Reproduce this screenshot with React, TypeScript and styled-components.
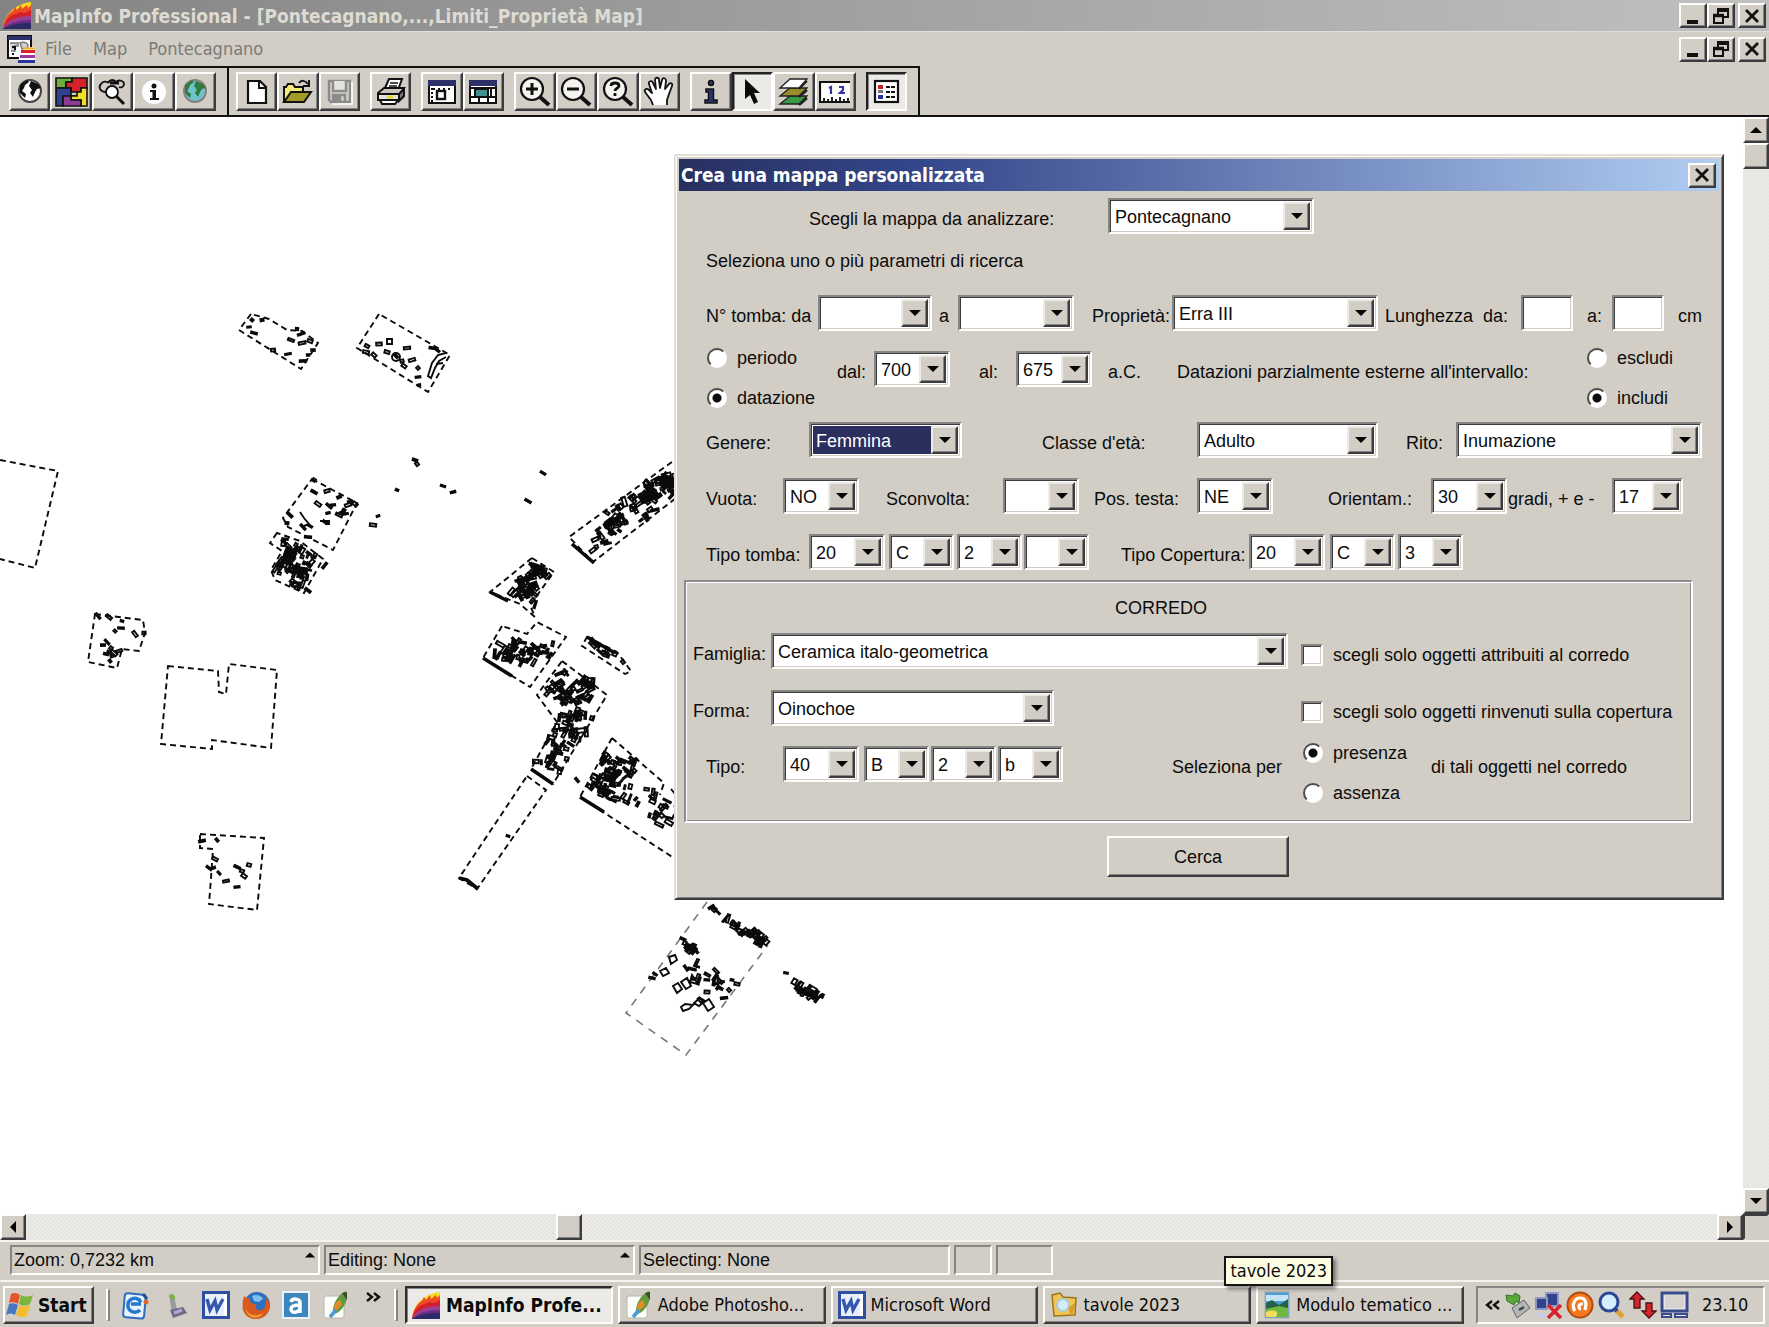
import React from "react";
import styled, { createGlobalStyle, css } from "styled-components";

const FACE = "#d2cec6";
const DARK = "#3c3c3e";
const MID = "#858583";
const UI = `"DejaVu Sans Condensed", "DejaVu Sans", sans-serif`;
const FORM = `"Liberation Sans", Arial, sans-serif`;

const GlobalStyle = createGlobalStyle`
  *, *::before, *::after { box-sizing: border-box; }
  body { margin: 0; background: ${FACE}; color: #0c0c0c; }
  button, input, select { font: inherit; color: inherit; margin: 0; padding: 0; border-radius: 0; }
  svg { display: block; flex: none; }
`;

const raised = css`
  background: ${FACE};
  border: 2px solid;
  border-color: #fdfdfb ${DARK} ${DARK} #fdfdfb;
  box-shadow: inset -1px -1px 0 ${MID};
`;
const sunken = css`
  border: 2px solid;
  border-color: ${MID} #fdfdfb #fdfdfb ${MID};
  box-shadow: inset 1px 1px 0 ${DARK}, inset -1px -1px 0 ${FACE};
`;

const Screen = styled.div`
  min-height: 100vh;
  display: flex;
  flex-direction: column;
  font: 18px/22px ${UI};
`;

/* ---------- window chrome ---------- */
const TitleBar = styled.header`
  display: flex;
  align-items: center;
  height: 31px;
  padding: 0 3px;
  gap: 2px;
  background: linear-gradient(90deg, #848484, #c0c0c0);
`;
const WindowTitle = styled.h1`
  flex: 1;
  margin: 0;
  font-size: 19px;
  line-height: 24px;
  font-weight: bold;
  color: #dedbd2;
  white-space: nowrap;
`;
const MenuBar = styled.nav`
  display: flex;
  align-items: center;
  height: 35px;
  padding: 0 3px 0 7px;
  border-top: 1px solid #e2dfd8;
`;
const Menus = styled.div`
  flex: 1;
  display: flex;
  gap: 21px;
  padding-left: 9px;
`;
const MenuItem = styled.button`
  border: 0;
  background: none;
  color: #7c7b78;
`;
const Controls = styled.div`
  display: flex;
`;
const ChromeButton = styled.button<{ $apart?: boolean }>`
  ${raised}
  width: 28px;
  height: 25px;
  display: grid;
  place-items: center;
  margin-left: ${(p) => (p.$apart ? 3 : 0)}px;
`;

/* ---------- tool bar ---------- */
const ToolStrip = styled.div`
  display: flex;
  border-bottom: 2px solid #111;
`;
const ToolSection = styled.div`
  display: flex;
  gap: 10px;
  padding: 4px 11px 4px 9px;
  border-top: 2px solid #111;
  border-right: 2px solid #111;
  & + & { padding-left: 7px; }
`;
const groupWidth: Record<number, number> = { 1: 41, 2: 83, 3: 124, 4: 166, 5: 207 };
const ToolGroup = styled.div<{ $count: number }>`
  display: grid;
  grid-auto-flow: column;
  grid-auto-columns: 1fr;
  width: ${(p) => groupWidth[p.$count]}px;
`;
const ToolButton = styled.button<{ $pressed?: boolean }>`
  ${raised}
  height: 39px;
  display: grid;
  place-items: center;
  ${(p) =>
    p.$pressed &&
    css`
      background: #eceae6;
      border-color: #222 #fdfdfb #fdfdfb #222;
      box-shadow: inset 1px 1px 0 ${MID};
    `}
`;

/* ---------- map and scroll bars ---------- */
const Workspace = styled.main`
  flex: 1;
  display: grid;
  grid-template-columns: minmax(0, 1fr) 26px;
  grid-template-rows: minmax(1097px, 1fr) 26px;
`;
const MapPane = styled.section`
  position: relative;
  background: #fff;
  overflow: hidden;
`;
const ScrollBar = styled.div<{ $vertical?: boolean }>`
  display: flex;
  flex-direction: ${(p) => (p.$vertical ? "column" : "row")};
  background: repeating-conic-gradient(#e5e4df 0 25%, #eaeae6 0 50%) 0 0 / 4px 4px;
`;
const ScrollButton = styled.button`
  ${raised}
  width: 26px;
  height: 26px;
  display: grid;
  place-items: center;
`;
const Track = styled.div<{ $grow: number }>`
  flex: ${(p) => p.$grow} 1 0;
`;
const Corner = styled.div`
  border: 2px solid;
  border-color: ${DARK} transparent transparent ${DARK};
`;

/* ---------- dialog ---------- */
const DialogFrame = styled.form`
  position: absolute;
  left: 674px;
  top: 37px;
  width: 1050px;
  padding: 3px;
  background: ${FACE};
  border: 2px solid;
  border-color: #e2dfd8 ${DARK} ${DARK} #e2dfd8;
  box-shadow: inset 1px 1px 0 #fff, inset -1px -1px 0 ${MID};
  font: 18px/22px ${FORM};
`;
const DialogTitle = styled.div`
  display: flex;
  align-items: center;
  justify-content: space-between;
  height: 32px;
  padding: 0 3px 0 2px;
  background: linear-gradient(90deg, #28305f, #33458a 22%, #6075ae 50%, #b1cdf2);
`;
const DialogName = styled.h2`
  margin: 0;
  font: bold 19px/24px ${UI};
  color: #fff;
`;
const DialogBody = styled.div`
  display: flex;
  flex-direction: column;
  padding: 7px 5px 18px;
`;
const Row = styled.div<{ $cols: string; $top?: number; $left?: number; $tall?: boolean }>`
  display: grid;
  grid-template-columns: ${(p) => p.$cols};
  align-items: ${(p) => (p.$tall ? "start" : "center")};
  min-height: 36px;
  margin-top: ${(p) => p.$top ?? 0}px;
  padding-left: ${(p) => p.$left ?? 22}px;
`;
const Text = styled.span`
  padding-top: 6px;
  white-space: pre;
`;
const FieldLabel = styled.label`
  padding-top: 6px;
  white-space: pre;
`;
const Intro = styled.p`
  margin: 16px 0 0 22px;
`;
const Lowered = styled.div<{ $cols: string }>`
  display: grid;
  grid-template-columns: ${(p) => p.$cols};
  align-items: center;
  padding-top: 6px;
`;
const ComboBox = styled.span<{ $w: number }>`
  ${sunken}
  display: flex;
  width: ${(p) => p.$w}px;
  height: 36px;
  padding: 2px;
  background: #fff;
`;
const ComboSelect = styled.select<{ $active?: boolean }>`
  appearance: none;
  flex: 1;
  min-width: 0;
  height: 28px;
  padding: 2px 0 0 3px;
  border: 0;
  outline: 0;
  background: ${(p) => (p.$active ? "#2a2f5e" : "#fff")};
  color: ${(p) => (p.$active ? "#fff" : "inherit")};
`;
const ComboArrow = styled.span`
  ${raised}
  border-color: #eceae4 ${DARK} ${DARK} #eceae4;
  flex: none;
  width: 27px;
  display: grid;
  place-items: center;
  pointer-events: none;
`;
const TextBox = styled.input`
  ${sunken}
  width: 52px;
  height: 36px;
  padding: 0 4px;
  background: #fff;
`;
const Choices = styled.div`
  display: grid;
  gap: 18px;
  padding-top: 2px;
`;
const Choice = styled.label<{ $low?: boolean }>`
  display: flex;
  align-items: center;
  gap: 10px;
  height: 22px;
  margin-top: ${(p) => (p.$low ? 8 : 0)}px;
  white-space: nowrap;
`;
const Radio = styled.input`
  appearance: none;
  width: 20px;
  height: 20px;
  border-radius: 50%;
  border: 2px solid;
  border-color: #4c4c4c #fff #fff #4c4c4c;
  background: #fff;
  &:checked { background: radial-gradient(circle, #0c0c0c 0 4px, #fff 5px); }
`;
const Check = styled.input`
  ${sunken}
  appearance: none;
  width: 22px;
  height: 22px;
  background: #fff;
`;
const Fieldset = styled.fieldset`
  margin: 10px 21px 0 0;
  padding: 0 0 17px;
  min-width: 0;
  border: 2px solid;
  border-color: #8a8c90 #fff #fff #8a8c90;
  box-shadow: inset 1px 1px 0 #fff, inset -1px -1px 0 #8a8c90;
`;
const GroupTitle = styled.h3`
  margin: 15px 0 0;
  padding-left: 429px;
  font: inherit;
`;
const SubmitButton = styled.button`
  ${raised}
  width: 182px;
  height: 41px;
  margin: 13px 0 0 423px;
`;

/* ---------- status bar and task bar ---------- */
const StatusBar = styled.footer`
  display: flex;
  gap: 4px;
  height: 40px;
  padding: 3px 10px 5px;
  border-top: 2px solid #f4f3ef;
  font: 18px/22px ${FORM};
`;
const StatusCell = styled.div<{ $w: number }>`
  width: ${(p) => p.$w}px;
  height: 30px;
  display: flex;
  justify-content: space-between;
  padding: 2px;
  border: 2px solid;
  border-color: ${MID} #fdfdfb #fdfdfb ${MID};
`;
const TaskBar = styled.footer`
  display: flex;
  align-items: flex-start;
  height: 47px;
  padding: 4px 4px 0 3px;
  border-top: 2px solid #f4f3ef;
`;
const StartButton = styled.button`
  ${raised}
  display: flex;
  align-items: center;
  gap: 3px;
  width: 91px;
  height: 38px;
  padding-left: 1px;
  font-size: 19px;
  font-weight: bold;
`;
const Grip = styled.span`
  width: 4px;
  height: 32px;
  border: 1px solid;
  border-width: 1px 2px 1px 2px;
  border-color: #fff ${MID} ${MID} #fff;
`;
const QuickLaunch = styled.div`
  display: flex;
  align-items: center;
  gap: 12px;
  height: 38px;
  padding: 0 7px 0 12px;
`;
const QuickButton = styled.button`
  border: 0;
  background: none;
  width: 28px;
  height: 30px;
  display: grid;
  place-items: center;
`;
const MoreButton = styled.button`
  border: 0;
  background: none;
  height: 30px;
  width: 20px;
  display: grid;
  justify-items: end;
  align-items: start;
`;
const Tasks = styled.div`
  flex: 1;
  display: grid;
  grid-template-columns: repeat(5, minmax(0, 1fr));
  gap: 5px;
  padding-right: 12px;
`;
const TaskSlot = styled.div`
  position: relative;
`;
const TaskButton = styled.button<{ $active?: boolean }>`
  ${raised}
  width: 100%;
  height: 38px;
  display: flex;
  align-items: center;
  gap: 5px;
  padding-left: 5px;
  white-space: nowrap;
  ${(p) =>
    p.$active &&
    css`
      background: #eceae6;
      border-color: #2c2c2c #fdfdfb #fdfdfb #2c2c2c;
      box-shadow: inset 1px 1px 0 ${MID};
      font-size: 19px;
      font-weight: bold;
    `}
`;
const Tip = styled.span`
  position: absolute;
  z-index: 2;
  left: 181px;
  top: -30px;
  padding: 2px 4px;
  white-space: nowrap;
  background: #fdfde4;
  border: 2px solid #141414;
  box-shadow: 3px 3px 4px rgba(0, 0, 0, 0.45);
`;
const Tray = styled.div`
  display: flex;
  align-items: center;
  gap: 3px;
  height: 38px;
  width: 289px;
  padding-left: 6px;
  border: 2px solid;
  border-color: ${MID} #fdfdfb #fdfdfb ${MID};
`;
const Clock = styled.time`
  padding-left: 10px;
`;

/* ---------- small glyphs ---------- */
const Tri = ({ d, w = 14 }: { d: "up" | "down" | "left" | "right"; w?: number }) => {
  const pts = { up: "1,10 13,10 7,4", down: "1,4 13,4 7,10", left: "10,1 10,13 4,7", right: "4,1 4,13 10,7" }[d];
  return (
    <svg width={w} height={w} viewBox="0 0 14 14" aria-hidden="true">
      <polygon points={pts} fill="#050505" />
    </svg>
  );
};
const MinGlyph = () => (
  <svg width="18" height="18" viewBox="0 0 18 18"><rect x="3" y="13" width="11" height="4" fill="#111" /></svg>
);
const RestoreGlyph = () => (
  <svg width="18" height="18" viewBox="0 0 18 18" fill="none" stroke="#111">
    <path d="M6 7V2.500H16V10H12" strokeWidth="2" /><path d="M5 3H17" strokeWidth="4" />
    <rect x="2" y="8" width="9" height="8" strokeWidth="2" fill={FACE} /><path d="M1 8.500H12" strokeWidth="3.500" />
  </svg>
);
const CloseGlyph = () => (
  <svg width="18" height="18" viewBox="0 0 18 18"><path d="M3 3L15 15M15 3L3 15" stroke="#111" strokeWidth="2.800" /></svg>
);
const Chevrons = ({ left }: { left?: boolean }) => (
  <svg width="17" height="14" viewBox="0 0 17 14" fill="none" stroke="#111" strokeWidth="2.400">
    {left ? <path d="M8 3L3 7L8 11M15 3L10 7L15 11" /> : <path d="M2 3L7 7L2 11M9 3L14 7L9 11" />}
  </svg>
);

/* ---------- icons ---------- */
const MapInfoIcon = () => (
  <svg width="29" height="27" viewBox="0 0 29 27">
    <path d="M0 27C1 12 12 2 28 0V27Z" fill="#f6dc1c" />
    <path d="M0 27C1 16 7 10 10 9L12 5L14 8L18 3L19 7L24 3L25 6L28 3V27Z" fill="#ee4a23" />
    <path d="M0 27C2 17 8 13 13 12L17 10L22 11L28 8V27Z" fill="#d4202e" />
    <path d="M0 27C4 18 14 14 28 14V27Z" fill="#9c3f94" />
    <path d="M0 27C6 21 14 18 28 18V27Z" fill="#6a2c86" />
    <path d="M0 27C8 22 16 21 28 21V27Z" fill="#2c2b66" />
  </svg>
);
const DocIcon = () => (
  <svg width="29" height="28" viewBox="0 0 29 28">
    <rect x="1" y="1" width="23" height="22" fill="#fff" stroke="#111" strokeWidth="2" />
    <rect x="1" y="1" width="23" height="4" fill="#2b3166" />
    <path d="M3 8h8v3H8v5H4M13 8c4-2 8 0 8 3s-3 4-6 3z" fill="#cfcfcf" stroke="#777" strokeWidth="1.500" />
    <path d="M5 12h3v3M6 18v2" stroke="#111" strokeWidth="2" fill="none" />
    <path d="M13 17C17 13 22 12 28 12V28H11Z" fill="#fff" />
    <path d="M17 13.500H28" stroke="#f2b51d" strokeWidth="2" />
    <path d="M14 16.500H28" stroke="#d7232c" strokeWidth="3" />
    <path d="M13 21.500H28" stroke="#a0379a" strokeWidth="3" />
    <path d="M11 26.500H28" stroke="#27359a" strokeWidth="3" />
  </svg>
);
const Globe = ({ sea, land, edge }: { sea: string; land: string; edge: string }) => (
  <svg width="30" height="28" viewBox="0 0 30 28">
    <circle cx="15" cy="13" r="11" fill={sea} stroke={edge} strokeWidth="2" />
    <path d="M5 7L12 2L14 4L10 7L9 10L7 13L11 16L10 20L5 15Z" fill={land} />
    <path d="M16 3L23 6L26 10L22 11L20 14L18 19L15 15L17 12L14 8Z" fill={land} />
  </svg>
);
const PuzzleIcon = () => (
  <svg width="33" height="30" viewBox="0 0 33 30" stroke="#111" strokeWidth="1.600">
    <path d="M1 1H17V5H11V11H1Z" fill="#6fae3a" />
    <path d="M17 1H32V11H26V15H16V11H11V5H17Z" fill="#d4232b" />
    <path d="M1 11H16V19H22V21H8V29H1Z" fill="#31418f" />
    <path d="M26 11H32V29H26V23H16V19H22V15H26Z" fill="#f0de28" />
    <path d="M8 19H16V23H26V29H8Z" fill="#8d3c95" />
  </svg>
);
const CloudSearch = () => (
  <svg width="30" height="28" viewBox="0 0 30 28" fill="none" stroke="#111" strokeWidth="1.800">
    <path d="M9 14C3 14 1 9 4 6C6 3 10 3 11 5M19 4C22 1 27 3 27 6C27 9 24 10 22 9M11 5C12 3 14 2 16 2" />
    <path d="M13 5h9" strokeWidth="3" /><path d="M16 2l4 3" strokeWidth="2.500" />
    <circle cx="15" cy="14" r="6" fill="#fff" /><path d="M19 18L27 26" strokeWidth="3" />
  </svg>
);
const InfoRound = () => (
  <svg width="30" height="28" viewBox="0 0 30 28">
    <circle cx="15" cy="14" r="12" fill="#fff" />
    <circle cx="15" cy="8" r="2.500" fill="#111" /><path d="M11 12H17V20H20V22H11V20H13.500V14H11Z" fill="#111" />
  </svg>
);
const NewIcon = () => (
  <svg width="24" height="28" viewBox="0 0 24 28"><path d="M3 3H15L21 9V25H3Z" fill="#fff" stroke="#111" strokeWidth="2.200" /><path d="M14 3V10H21" fill="none" stroke="#111" strokeWidth="2" /></svg>
);
const OpenIcon = () => (
  <svg width="32" height="28" viewBox="0 0 32 28" stroke="#111" strokeWidth="2">
    <path d="M2 24V9H4L6 6H11L13 9H21V14" fill="#f3ea7c" /><path d="M2 24L9 14H29L22 24Z" fill="#a39a27" />
    <path d="M17 5C19 2 23 2 26 6M27 2V8H21" fill="none" />
  </svg>
);
const SaveIcon = () => (
  <svg width="28" height="28" viewBox="0 0 28 28" fill="none" stroke="#8b8b8b" strokeWidth="2.400">
    <path d="M4 3H25V24H6L4 22Z" /><path d="M8 3V13H21V3" fill="#e6e4df" /><path d="M8 24V17H20V24" /><path d="M10 18h5v6h-5z" fill="#8b8b8b" />
    <path d="M27 4V26H7" stroke="#fff" strokeWidth="1.500" />
  </svg>
);
const PrintIcon = () => (
  <svg width="32" height="30" viewBox="0 0 32 30" stroke="#111" strokeWidth="2">
    <path d="M10 11L14 2H27L23 13" fill="#fff" /><path d="M15 6H23M14 9H22" strokeWidth="1.500" />
    <path d="M3 16L9 11H29L25 17H3Z" fill="#c9c7c0" /><path d="M3 17H24V23H3Z" fill="#e4e2dc" /><path d="M24 17L29 12V19L24 24Z" fill="#777" />
    <path d="M5 23H23L20 27H7Z" fill="#fff" /><path d="M12 20H18" stroke="#e8d72a" strokeWidth="3" />
  </svg>
);
const WinIcon = () => (
  <svg width="30" height="26" viewBox="0 0 30 26">
    <rect x="2" y="2" width="26" height="22" fill="#fff" stroke="#111" strokeWidth="2" /><rect x="1" y="1" width="28" height="6" fill="#2b3166" />
    <path d="M5 9V23" stroke="#111" strokeWidth="2" strokeDasharray="2 2" /><path d="M6 10H26" stroke="#111" strokeWidth="2" strokeDasharray="2 3" />
    <rect x="10" y="12" width="8" height="8" fill="#fff" stroke="#111" strokeWidth="2.400" />
  </svg>
);
const WinGrid = () => (
  <svg width="30" height="26" viewBox="0 0 30 26">
    <rect x="2" y="2" width="26" height="22" fill="#fff" stroke="#111" strokeWidth="2" /><rect x="1" y="1" width="28" height="6" fill="#2b3166" />
    <path d="M2 9H28M2 18H28M11 18V24M20 18V24M23 9V18" stroke="#111" strokeWidth="2" />
    <rect x="7" y="10" width="13" height="8" fill="#3f9290" stroke="#111" strokeWidth="2" />
  </svg>
);
const Lens = ({ kind }: { kind: "plus" | "minus" | "ask" }) => (
  <svg width="32" height="31" viewBox="0 0 32 31" fill="none" stroke="#111" strokeWidth="2.200">
    <circle cx="13" cy="13" r="11" fill="#f4f3f0" /><path d="M21 21L30 29" strokeWidth="4" />
    {kind !== "ask" && <path d="M7 13H19" strokeWidth="3" />}
    {kind === "plus" && <path d="M13 7V19" strokeWidth="3" />}
    {kind === "ask" && <path d="M9 10C9 6 17 6 17 10C17 12 13 12 13 15M13 17V20" strokeWidth="2.800" />}
  </svg>
);
const HandIcon = () => (
  <svg width="32" height="31" viewBox="0 0 32 31" fill="#fff" stroke="#111" strokeWidth="1.800" strokeLinejoin="round">
    <path d="M10 29L8 24L2 16C1 13 4 12 6 14L9 17L6 8C5 5 9 4 10 7L13 13L12 4C12 1 16 1 16 4L17 12L19 4C20 1 23 2 23 5L22 13L26 8C28 6 30 8 29 10L26 18L24 24V29" />
  </svg>
);
const InfoSerif = () => (
  <svg width="20" height="28" viewBox="0 0 20 28" fill="#2b3470" stroke="#111" strokeWidth="1.500">
    <circle cx="10" cy="5" r="2.500" /><path d="M5 11H12.500V22H16V25H4V22H7.500V14H5Z" />
  </svg>
);
const ArrowIcon = () => (
  <svg width="20" height="28" viewBox="0 0 20 28"><path d="M3 1V21L8 17L12 26L16 24L12 15H18Z" fill="#0a0a0a" /></svg>
);
const LayersIcon = () => (
  <svg width="32" height="30" viewBox="0 0 32 30" stroke="#222" strokeWidth="1.300">
    <path d="M2 27L12 19H29L21 27Z" fill="#3a9b45" /><path d="M21 28L29 21" strokeWidth="2.500" />
    <path d="M2 19L12 11H29L21 19Z" fill="#9a8d2a" /><path d="M21 20L29 13" strokeWidth="2.500" />
    <path d="M2 11L12 2H29L21 11Z" fill="#fff" /><path d="M21 12L29 4" strokeWidth="2" />
  </svg>
);
const RulerIcon = () => (
  <svg width="32" height="26" viewBox="0 0 32 26">
    <rect x="1" y="3" width="30" height="21" fill="#fff" /><path d="M1 24V3H31M1 23H31" stroke="#111" strokeWidth="2.200" fill="none" />
    <path d="M5 23V19M9 23V20M13 23V18M17 23V20M21 23V18M25 23V20M29 23V19" stroke="#111" strokeWidth="1.800" />
    <path d="M10 9L12 8V15M20 8H24V11L21 14H26" stroke="#3336a0" strokeWidth="2.200" fill="none" />
  </svg>
);
const LegendIcon = () => (
  <svg width="28" height="26" viewBox="0 0 28 26">
    <rect x="2" y="2" width="23" height="21" fill="#fff" stroke="#111" strokeWidth="2.200" />
    <rect x="5" y="6" width="5" height="4" fill="#c8202a" /><rect x="5" y="11" width="5" height="3" fill="#777" /><rect x="5" y="16" width="5" height="4" fill="#2a31a0" />
    <path d="M13 8H22M13 13H22M13 18H22" stroke="#111" strokeWidth="2" strokeDasharray="4 1" />
  </svg>
);
const WinFlag = () => (
  <svg width="29" height="30" viewBox="0 0 29 30">
    <path d="M5 4C9 2 11 3 14 5L12 14C9 12 6 12 3 13Z" fill="#e4562a" /><path d="M15 5C19 7 22 7 27 5L24 14C20 16 17 16 13 14Z" fill="#78b63c" />
    <path d="M3 14C6 13 9 13 12 15L9 25C6 23 3 23 0 25Z" fill="#4878c4" /><path d="M13 15C17 17 20 17 24 15L21 26C17 28 14 27 10 25Z" fill="#f3bd2c" />
  </svg>
);
const BrowserIcon = () => (
  <svg width="28" height="30" viewBox="0 0 28 30">
    <rect x="2" y="4" width="21" height="24" rx="3" fill="#e9f3fb" stroke="#2e6cc0" strokeWidth="2" transform="rotate(5 13 15)" />
    <path d="M18 20A7 7 0 1 1 19 12M9 14H19" fill="none" stroke="#2478d0" strokeWidth="3.500" /><circle cx="24" cy="12" r="2.500" fill="#e0662a" /><path d="M21 4l4 5" stroke="#2a4d90" strokeWidth="3" />
  </svg>
);
const LampIcon = () => (
  <svg width="26" height="28" viewBox="0 0 26 28">
    <path d="M6 3L11 4L14 19L9 22Z" fill="#9a9aa2" /><path d="M8 4l3 4" stroke="#76b43c" strokeWidth="4" /><path d="M7 19L20 16L24 22L10 27Z" fill="#6c6c86" /><path d="M11 22L19 19" stroke="#b9a5d2" strokeWidth="3" />
  </svg>
);
const WordIcon = () => (
  <svg width="28" height="28" viewBox="0 0 28 28">
    <rect x="1.500" y="1.500" width="25" height="25" fill="#e8effc" stroke="#2f4fa2" strokeWidth="3" />
    <rect x="22" y="3" width="3" height="22" fill="#fff" />
    <path d="M5 8L8 19L13 10L15 19L21 8" fill="none" stroke="#3556ac" strokeWidth="3.400" />
  </svg>
);
const FoxIcon = () => (
  <svg width="29" height="29" viewBox="0 0 29 29">
    <circle cx="15" cy="14" r="13" fill="#2d6fc0" /><path d="M10 5C14 3 19 4 21 8L17 11L12 10Z" fill="#7fc0ee" />
    <path d="M2 5C4 7 5 7 8 7C7 11 10 14 15 13C12 16 14 20 19 19C23 18 25 13 24 6C29 12 29 20 23 25C15 31 4 28 1 19C0 14 1 9 2 5Z" fill="#d9591f" />
    <path d="M3 16C5 24 14 27 21 22C18 29 5 29 3 16Z" fill="#f6a52c" />
  </svg>
);
const AIcon = () => (
  <svg width="28" height="28" viewBox="0 0 28 28">
    <rect x="1" y="1" width="26" height="26" fill="#3b86bd" stroke="#e8f2f8" strokeWidth="2" />
    <path d="M9 11C10 7 18 7 18 12V22M18 14C11 14 9 16 9 18C9 23 17 22 18 17" fill="none" stroke="#fff" strokeWidth="3.500" />
  </svg>
);
const FeatherIcon = () => (
  <svg width="28" height="30" viewBox="0 0 28 30">
    <rect x="2" y="6" width="20" height="22" rx="2" fill="#fdfdfc" stroke="#b9b6ae" />
    <path d="M11 24C10 15 15 5 24 1C27 8 23 18 15 23Z" fill="#5f9b3c" /><path d="M12 17C13 13 15 11 18 10L20 15L14 21Z" fill="#e48a2a" />
    <path d="M20 3L25 2L25 10Z" fill="#374c2c" /><path d="M8 27L14 20" stroke="#4a9bd0" strokeWidth="3.500" />
  </svg>
);
const FolderIcon = () => (
  <svg width="28" height="28" viewBox="0 0 28 28">
    <path d="M2 4L10 2L13 6L26 7L25 24L4 25Z" fill="#f2c64e" stroke="#9a7420" strokeWidth="1.500" />
    <circle cx="13" cy="14" r="6" fill="#d4ecf8" stroke="#a8cbe0" strokeWidth="2" /><path d="M18 17L22 26L25 12Z" fill="#d89b2e" />
  </svg>
);
const PictureIcon = () => (
  <svg width="28" height="28" viewBox="0 0 28 28">
    <rect x="2" y="1" width="24" height="26" fill="#4a9fd8" stroke="#aaa" /><path d="M3 4H25V10H3Z" fill="#c4e4f6" /><path d="M3 12L9 9L16 14L25 8V20H3Z" fill="#26604a" />
    <path d="M3 18L16 15L25 17V26H3Z" fill="#6fb83c" /><path d="M3 21C10 18 17 20 13 26H3Z" fill="#f2dc5c" />
  </svg>
);
const EjectIcon = () => (
  <svg width="27" height="28" viewBox="0 0 27 28"><path d="M8 17L20 9L26 17L13 27Z" fill="#b2b4b8" stroke="#666" /><path d="M15 19l5-3" stroke="#444" strokeWidth="2.500" /><path d="M2 4L9 5L11 2L16 5L15 12L12 10L10 14L3 10Z" fill="#58a83c" stroke="#35702a" /></svg>
);
const NetIcon = () => (
  <svg width="29" height="28" viewBox="0 0 29 28"><rect x="12" y="2" width="12" height="13" fill="#33428c" stroke="#8d99c4" strokeWidth="2" /><rect x="2" y="7" width="11" height="11" fill="#33428c" stroke="#8d99c4" strokeWidth="2" /><path d="M2 22h9l2 4H3z" fill="#c9cfe8" /><path d="M14 14L27 27M27 14L14 27" stroke="#d8242e" strokeWidth="3.500" /></svg>
);
const AvastIcon = () => (
  <svg width="28" height="28" viewBox="0 0 28 28"><circle cx="14" cy="14" r="12.500" fill="#f2791c" stroke="#b14a12" strokeWidth="2" /><path d="M9 20C5 14 9 7 14 7C20 7 21 12 19 19M17 13C12 12 12 18 15 18" fill="none" stroke="#fff" strokeWidth="3.200" /></svg>
);
const SearchTray = () => (
  <svg width="29" height="29" viewBox="0 0 29 29"><circle cx="12" cy="11" r="9" fill="#d5eefb" stroke="#2c4796" strokeWidth="3" /><path d="M18 18L21 21" stroke="#2c4796" strokeWidth="4" /><path d="M20 20L26 26" stroke="#dba437" strokeWidth="5" /></svg>
);
const ArrowsTray = () => (
  <svg width="28" height="28" viewBox="0 0 28 28" fill="#d4242c" stroke="#4a1010" strokeWidth="1.300"><path d="M8 1L15 8H11V17H5V8H1Z" /><path d="M20 27L27 20H23V12H17V20H13Z" /></svg>
);
const ScreenTray = () => (
  <svg width="29" height="28" viewBox="0 0 29 28"><rect x="2" y="2" width="25" height="18" fill="#e4e8ee" stroke="#3b4a8a" strokeWidth="3" /><path d="M5 4H24V17H5Z" fill="#d5d3cc" /><path d="M2 26V23H11V26ZM15 26V23H27V26Z" fill="#e8e8f0" stroke="#3b4a8a" strokeWidth="2" /></svg>
);

/* ---------- excavation map ---------- */
type Pt = [number, number];
const seeded = (seed: number) => () => {
  seed = (seed * 16807) % 2147483647;
  return seed / 2147483647;
};
const tomb = (x: number, y: number, len: number, wid: number, a: number) => {
  const c = Math.cos(a), s = Math.sin(a);
  const p = [[-len, -wid], [len, -wid], [len, wid], [-len, wid]].map(
    ([u, v]) => `${(x + u * c - v * s).toFixed(1)} ${(y + u * s + v * c).toFixed(1)}`
  );
  return `M${p.join("L")}Z`;
};
/* Scatters n tombs over the parallelogram that starts at o and spans u and v. */
const scatter = (seed: number, n: number, o: Pt, u: Pt, v: Pt, size = 3) => {
  const r = seeded(seed * 7919);
  r(); r();
  let d = "";
  for (let i = 0; i < n; i++) {
    const s = r(), t = r();
    const ang = Math.atan2(u[1], u[0]) + (r() > 0.5 ? Math.PI / 2 : 0) + (r() - 0.5) * 0.8;
    d += tomb(o[0] + u[0] * s + v[0] * t, o[1] + u[1] * s + v[1] * t, size * (0.3 + r() * 0.7), size * (0.1 + r() * 0.3), ang);
  }
  return d;
};
const spots = (list: Pt[], seed: number) => {
  const r = seeded(seed * 7919);
  r(); r();
  return list.map(([x, y]) => tomb(x, y, 1.2 + r() * 2.2, 0.6 + r() * 0.9, (r() - 0.3) * 1.4)).join("");
};

const outlines = [
  "M251 314L239 330L301 369L318 343L302 331L287 330L269 319Z",
  "M379 314L357 348L428 392L450 355Z",
  "M0 460L58 471L35 568L0 559",
  "M312 479L357 503L333 550L288 527L283 518Z",
  "M277 533L270 543L282 551L271 570L275 580L304 593L323 559L300 541Z",
  "M95 614L143 620L145 633L139 651L122 649L117 668L88 662Z",
  "M168 666L218 671L219 692L226 694L229 664L277 670L271 748L212 740L212 749L161 744Z",
  "M200 834L264 838L257 910L209 904L211 878L213 849L200 848Z",
  "M680 456L569 537L593 562L680 495",
  "M532 558L554 572L530 605L535 617L520 604L490 592Z",
  "M502 626L483 658L530 687L566 637L537 622L527 634Z",
  "M587 637L617 652L631 671L625 674L582 646Z",
  "M562 661L607 695L553 784L531 769L557 722L537 695Z",
  "M527 776L546 790L477 889L459 878Z",
  "M612 738L664 783L660 795M671 789L680 800M612 738L580 797L680 862",
];
const heavy = "M572 544L594 563M490 592L508 601M483 658L512 676M531 769L553 784M459 878L467 880L478 889M580 797L604 812M587 637L615 653";
const tombs = [
  spots([[252, 320], [249, 327], [254, 333], [291, 340], [302, 343], [310, 341], [288, 354], [273, 350], [303, 361], [308, 355], [297, 329], [262, 320], [313, 350], [301, 334]], 11),
  spots([[396, 356], [387, 352], [367, 346], [366, 352], [374, 355], [379, 344], [404, 366], [407, 348], [412, 360], [418, 368], [418, 377], [419, 385], [402, 361], [437, 350], [432, 348]], 7),
  "M387 339h5v5h-5zM392 357a4 4 0 1 0 8 0a4 4 0 1 0-8 0zM446 353l-8 2l-6 8l-4 13l3 2l4-10l4-7l7-4M436 364l7-1",
  spots([[314, 480], [314, 492], [327, 491], [318, 504], [329, 506], [328, 513], [339, 497], [333, 505], [344, 510], [348, 505], [339, 515], [350, 502], [325, 522], [310, 526], [287, 523], [303, 527], [355, 504], [290, 515], [308, 537], [342, 512], [345, 514]], 19),
  "M300 512l4 6l5 6l-5 2M320 521h9v3h-4",
  scatter(31, 48, [284, 547], [28, 14], [-6, 20], 4.500),
  scatter(35, 14, [276, 533], [44, 24], [6, 10], 4),
  scatter(36, 8, [273, 568], [32, 16], [4, 8], 4),
  spots([[98, 616], [109, 617], [115, 631], [121, 628], [122, 621], [135, 634], [144, 633], [103, 645], [107, 642], [109, 652], [112, 656], [119, 651], [110, 661], [106, 654], [111, 648], [114, 653]], 3),
  spots([[217, 840], [215, 859], [209, 868], [219, 873], [226, 881], [237, 867], [242, 871], [244, 876], [249, 865], [237, 887], [202, 841], [213, 868]], 5),
  scatter(41, 42, [580, 540], [95, -66], [13, 15], 4.500),
  scatter(43, 30, [602, 516], [66, -44], [6, 12], 5),
  scatter(44, 26, [646, 484], [28, -14], [0, 18], 5),
  scatter(45, 14, [604, 524], [18, -12], [4, 10], 5),
  scatter(47, 40, [505, 588], [32, -20], [16, 10], 5),
  scatter(46, 14, [530, 562], [16, 8], [4, 8], 4),
  scatter(48, 7, [522, 580], [10, 4], [6, 22], 4),
  scatter(53, 42, [493, 655], [38, 16], [14, -22], 4.500),
  scatter(54, 9, [540, 640], [18, 4], [-6, 14], 3),
  scatter(59, 10, [585, 643], [38, 24], [4, -5], 4.500),
  scatter(61, 46, [541, 690], [22, -20], [38, 22], 4.500),
  scatter(64, 9, [583, 676], [12, 6], [-2, 8], 5),
  scatter(62, 34, [562, 708], [32, 6], [-12, 28], 5),
  scatter(63, 28, [550, 736], [26, 10], [-16, 28], 4.500),
  scatter(67, 44, [603, 750], [26, 12], [-14, 40], 5),
  scatter(68, 46, [594, 788], [85, 48], [14, -22], 4.500),
  scatter(65, 10, [622, 750], [20, 14], [-4, 16], 4),
  scatter(71, 24, [708, 903], [56, 40], [-3, 4], 4.500),
  scatter(72, 9, [752, 930], [12, 10], [4, 4], 5),
  scatter(73, 9, [682, 939], [16, 12], [-2, 4], 5),
  scatter(74, 16, [692, 960], [30, 14], [-2, 18], 4),
  spots([[683, 939], [689, 946], [697, 952], [716, 971], [722, 982], [732, 980], [737, 984], [724, 998], [729, 990], [652, 978], [655, 974], [707, 992], [700, 1000], [686, 968]], 23),
  "M669 957l6-2l2 5l-6 4zM660 971l6-3l3 5l-6 3zM673 986l5-3l4 6l-5 4zM681 982l6-4l4 8l-5 3zM692 975l6 9l-8-2z",
  "M681 1007l4-3l8 1l-4 4l-6 2zM694 1003l6-5l5 3l-6 5zM703 1003l6-4l5 8l-6 4z",
  scatter(79, 22, [790, 976], [34, 18], [-3, 10], 5),
  spots([[415, 460], [417, 464], [397, 490], [443, 486], [453, 492], [373, 525], [378, 516], [543, 473], [528, 501], [508, 836], [577, 780], [786, 973]], 29),
];
const SiteMap = () => (
  <svg width="1100" height="1000" viewBox="0 117 1100 1000" role="img" aria-label="Pontecagnano" fill="none" stroke="#0a0a0a">
    {outlines.map((d) => <path key={d} d={d} strokeWidth="1.900" strokeDasharray="6 4" />)}
    <path d="M707 902L626 1013L686 1055L768 945" stroke="#777" strokeWidth="1.600" strokeDasharray="8 7" />
    <path d={heavy} strokeWidth="3.600" />
    {tombs.map((d, i) => <path key={i} d={d} strokeWidth="1.900" />)}
  </svg>
);

/* ---------- parts ---------- */
const WindowButtons = () => (
  <Controls>
    <ChromeButton aria-label="Minimize"><MinGlyph /></ChromeButton>
    <ChromeButton aria-label="Restore"><RestoreGlyph /></ChromeButton>
    <ChromeButton aria-label="Close" $apart><CloseGlyph /></ChromeButton>
  </Controls>
);

const Combo = ({ id, w, value = "", active, label }: { id: string; w: number; value?: string; active?: boolean; label?: string }) => (
  <ComboBox $w={w}>
    <ComboSelect id={id} aria-label={label} $active={active} defaultValue={value}>
      <option value={value}>{value}</option>
    </ComboSelect>
    <ComboArrow><Tri d="down" /></ComboArrow>
  </ComboBox>
);

const SearchDialog = () => (
  <DialogFrame onSubmit={(e) => e.preventDefault()}>
    <DialogTitle>
      <DialogName>Crea una mappa personalizzata</DialogName>
      <ChromeButton type="button" aria-label="Chiudi"><CloseGlyph /></ChromeButton>
    </DialogTitle>
    <DialogBody>
      <Row $cols="299px 206px" $left={125}>
        <FieldLabel htmlFor="mappa">Scegli la mappa da analizzare:</FieldLabel>
        <Combo id="mappa" w={206} value="Pontecagnano" />
      </Row>
      <Intro>Seleziona uno o più parametri di ricerca</Intro>
      <Row $top={23} $cols="112px 121px 19px 134px 80px 213px 136px 66px 25px 66px auto">
        <FieldLabel htmlFor="tomba-da">N° tomba: da</FieldLabel>
        <Combo id="tomba-da" w={114} />
        <FieldLabel htmlFor="tomba-a">a</FieldLabel>
        <Combo id="tomba-a" w={116} />
        <FieldLabel htmlFor="proprieta">Proprietà:</FieldLabel>
        <Combo id="proprieta" w={206} value="Erra III" />
        <FieldLabel htmlFor="lung-da">{"Lunghezza  da:"}</FieldLabel>
        <TextBox id="lung-da" />
        <FieldLabel htmlFor="lung-a">a:</FieldLabel>
        <TextBox id="lung-a" />
        <Text>cm</Text>
      </Row>
      <Row $tall $top={14} $left={23} $cols="130px 750px auto">
        <Choices>
          <Choice><Radio type="radio" name="tempo" />periodo</Choice>
          <Choice><Radio type="radio" name="tempo" defaultChecked />datazione</Choice>
        </Choices>
        <Lowered $cols="37px 105px 37px 92px 69px auto">
          <FieldLabel htmlFor="dal">dal:</FieldLabel>
          <Combo id="dal" w={76} value="700" />
          <FieldLabel htmlFor="al">al:</FieldLabel>
          <Combo id="al" w={76} value="675" />
          <Text>a.C.</Text>
          <Text>Datazioni parzialmente esterne all'intervallo:</Text>
        </Lowered>
        <Choices>
          <Choice><Radio type="radio" name="esterne" />escludi</Choice>
          <Choice><Radio type="radio" name="esterne" defaultChecked />includi</Choice>
        </Choices>
      </Row>
      <Row $top={13} $cols="103px 233px 155px 209px 50px auto">
        <FieldLabel htmlFor="genere">Genere:</FieldLabel>
        <Combo id="genere" w={153} value="Femmina" active />
        <FieldLabel htmlFor="classe">Classe d'età:</FieldLabel>
        <Combo id="classe" w={181} value="Adulto" />
        <FieldLabel htmlFor="rito">Rito:</FieldLabel>
        <Combo id="rito" w={246} value="Inumazione" />
      </Row>
      <Row $top={20} $cols="77px 103px 117px 91px 103px 131px 103px 77px 104px auto">
        <FieldLabel htmlFor="vuota">Vuota:</FieldLabel>
        <Combo id="vuota" w={76} value="NO" />
        <FieldLabel htmlFor="sconvolta">Sconvolta:</FieldLabel>
        <Combo id="sconvolta" w={76} />
        <FieldLabel htmlFor="testa">Pos. testa:</FieldLabel>
        <Combo id="testa" w={76} value="NE" />
        <FieldLabel htmlFor="orient">Orientam.:</FieldLabel>
        <Combo id="orient" w={76} value="30" />
        <FieldLabel htmlFor="gradi">gradi, + e -</FieldLabel>
        <Combo id="gradi" w={71} value="17" />
      </Row>
      <Row $top={20} $cols="103px 80px 68px 67px 97px 128px 81px 68px auto">
        <FieldLabel htmlFor="tt1">Tipo tomba:</FieldLabel>
        <Combo id="tt1" w={76} value="20" />
        <Combo id="tt2" w={65} value="C" label="Tipo tomba 2" />
        <Combo id="tt3" w={65} value="2" label="Tipo tomba 3" />
        <Combo id="tt4" w={65} label="Tipo tomba 4" />
        <FieldLabel htmlFor="tc1">Tipo Copertura:</FieldLabel>
        <Combo id="tc1" w={76} value="20" />
        <Combo id="tc2" w={65} value="C" label="Tipo Copertura 2" />
        <Combo id="tc3" w={65} value="3" label="Tipo Copertura 3" />
      </Row>
      <Fieldset>
        <GroupTitle>CORREDO</GroupTitle>
        <Row $top={14} $left={7} $cols="78px 530px auto">
          <FieldLabel htmlFor="famiglia">Famiglia:</FieldLabel>
          <Combo id="famiglia" w={517} value="Ceramica italo-geometrica" />
          <Choice $low><Check type="checkbox" />scegli solo oggetti attribuiti al corredo</Choice>
        </Row>
        <Row $top={21} $left={7} $cols="78px 530px auto">
          <FieldLabel htmlFor="forma">Forma:</FieldLabel>
          <Combo id="forma" w={283} value="Oinochoe" />
          <Choice $low><Check type="checkbox" />scegli solo oggetti rinvenuti sulla copertura</Choice>
        </Row>
        <Row $tall $top={14} $left={20} $cols="597px 128px auto">
          <Lowered $cols="77px 81px 67px 67px 174px auto">
            <FieldLabel htmlFor="tp1">Tipo:</FieldLabel>
            <Combo id="tp1" w={76} value="40" />
            <Combo id="tp2" w={65} value="B" label="Tipo 2" />
            <Combo id="tp3" w={65} value="2" label="Tipo 3" />
            <Combo id="tp4" w={65} value="b" label="Tipo 4" />
            <Text>Seleziona per</Text>
          </Lowered>
          <Choices>
            <Choice><Radio type="radio" name="per" defaultChecked />presenza</Choice>
            <Choice><Radio type="radio" name="per" />assenza</Choice>
          </Choices>
          <Lowered $cols="auto"><Row $cols="auto" $left={0}><Text>di tali oggetti nel corredo</Text></Row></Lowered>
        </Row>
      </Fieldset>
      <SubmitButton type="submit">Cerca</SubmitButton>
    </DialogBody>
  </DialogFrame>
);

type Tool = { name: string; icon: React.ReactNode; on?: boolean };
const sectionA: Tool[][] = [[
  { name: "Mappa", icon: <Globe sea="#fff" land="#111" edge="#444" /> },
  { name: "Tematismo", icon: <PuzzleIcon /> },
  { name: "Ricerca", icon: <CloudSearch /> },
  { name: "Informazioni", icon: <InfoRound /> },
  { name: "Globo", icon: <Globe sea="#6cc4cc" land="#2f7a3c" edge="#8a7f7c" /> },
]];
const sectionB: Tool[][] = [
  [{ name: "New", icon: <NewIcon /> }, { name: "Open", icon: <OpenIcon /> }, { name: "Save", icon: <SaveIcon /> }],
  [{ name: "Print", icon: <PrintIcon /> }],
  [{ name: "New Mapper", icon: <WinIcon /> }, { name: "New Layout", icon: <WinGrid /> }],
  [
    { name: "Zoom in", icon: <Lens kind="plus" /> }, { name: "Zoom out", icon: <Lens kind="minus" /> },
    { name: "Change view", icon: <Lens kind="ask" /> }, { name: "Grabber", icon: <HandIcon /> },
  ],
  [
    { name: "Info", icon: <InfoSerif /> }, { name: "Select", icon: <ArrowIcon />, on: true },
    { name: "Layer control", icon: <LayersIcon /> }, { name: "Ruler", icon: <RulerIcon /> },
  ],
  [{ name: "Legend", icon: <LegendIcon />, on: true }],
];
const Tools = ({ groups }: { groups: Tool[][] }) => (
  <ToolSection>
    {groups.map((g) => (
      <ToolGroup key={g[0].name} $count={g.length}>
        {g.map((t) => <ToolButton key={t.name} aria-label={t.name} $pressed={t.on}>{t.icon}</ToolButton>)}
      </ToolGroup>
    ))}
  </ToolSection>
);

const quick = [
  { name: "Browser", icon: <BrowserIcon /> }, { name: "Scanner", icon: <LampIcon /> }, { name: "Word", icon: <WordIcon /> },
  { name: "Firefox", icon: <FoxIcon /> }, { name: "Acrobat", icon: <AIcon /> }, { name: "Photoshop", icon: <FeatherIcon /> },
];
const tasks = [
  { text: "MapInfo Profe...", icon: <MapInfoIcon />, active: true },
  { text: "Adobe Photosho...", icon: <FeatherIcon /> },
  { text: "Microsoft Word", icon: <WordIcon /> },
  { text: "tavole 2023", icon: <FolderIcon />, tip: true },
  { text: "Modulo tematico ...", icon: <PictureIcon /> },
];

export default function App() {
  return (
    <Screen>
      <GlobalStyle />
      <TitleBar>
        <MapInfoIcon />
        <WindowTitle>MapInfo Professional - [Pontecagnano,...,Limiti_Proprietà Map]</WindowTitle>
        <WindowButtons />
      </TitleBar>
      <MenuBar>
        <DocIcon />
        <Menus>
          <MenuItem>File</MenuItem>
          <MenuItem>Map</MenuItem>
          <MenuItem>Pontecagnano</MenuItem>
        </Menus>
        <WindowButtons />
      </MenuBar>
      <ToolStrip>
        <Tools groups={sectionA} />
        <Tools groups={sectionB} />
      </ToolStrip>
      <Workspace>
        <MapPane>
          <SiteMap />
          <SearchDialog />
        </MapPane>
        <ScrollBar $vertical>
          <ScrollButton aria-label="Scroll up"><Tri d="up" /></ScrollButton>
          <ScrollButton aria-label="Vertical position" />
          <Track $grow={1} />
          <ScrollButton aria-label="Scroll down"><Tri d="down" /></ScrollButton>
        </ScrollBar>
        <ScrollBar>
          <ScrollButton aria-label="Scroll left"><Tri d="left" /></ScrollButton>
          <Track $grow={530} />
          <ScrollButton aria-label="Horizontal position" />
          <Track $grow={1135} />
          <ScrollButton aria-label="Scroll right"><Tri d="right" /></ScrollButton>
        </ScrollBar>
        <Corner />
      </Workspace>
      <StatusBar>
        <StatusCell $w={310}>Zoom: 0,7232 km<Tri d="up" w={12} /></StatusCell>
        <StatusCell $w={311}>Editing: None<Tri d="up" w={12} /></StatusCell>
        <StatusCell $w={311}>Selecting: None</StatusCell>
        <StatusCell $w={38} />
        <StatusCell $w={57} />
      </StatusBar>
      <TaskBar>
        <StartButton><WinFlag />Start</StartButton>
        <QuickLaunch>
          <Grip />
          {quick.map((q) => <QuickButton key={q.name} aria-label={q.name}>{q.icon}</QuickButton>)}
          <MoreButton aria-label="More"><Chevrons /></MoreButton>
          <Grip />
        </QuickLaunch>
        <Tasks>
          {tasks.map((t) => (
            <TaskSlot key={t.text}>
              <TaskButton $active={t.active}>{t.icon}{t.text}</TaskButton>
              {t.tip && <Tip role="tooltip">{t.text}</Tip>}
            </TaskSlot>
          ))}
        </Tasks>
        <Tray>
          <Chevrons left />
          <EjectIcon /><NetIcon /><AvastIcon /><SearchTray /><ArrowsTray /><ScreenTray />
          <Clock>23.10</Clock>
        </Tray>
      </TaskBar>
    </Screen>
  );
}
